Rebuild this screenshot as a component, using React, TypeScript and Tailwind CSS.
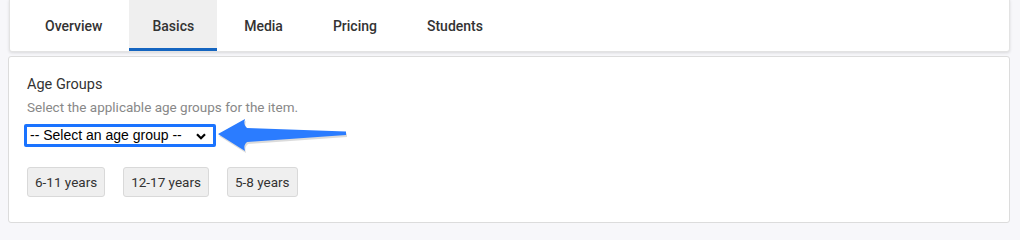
import { useState } from "react";

const tabs = ["Overview", "Basics", "Media", "Pricing", "Students"];
const ageGroups = ["6-11 years", "12-17 years", "5-8 years"];

export default function App() {
  const [activeTab, setActiveTab] = useState("Basics");

  return (
    <div className="h-screen w-full overflow-hidden bg-[#f7f7fa] pl-[8px] pr-[10px] font-['Roboto',sans-serif] text-[14px] text-[#333]">
      <div className="ml-px -mt-px flex h-[53px] items-stretch rounded-b-[3px] border border-[#e3e3e3] bg-white pl-[12px] shadow-[0_1px_3px_rgba(0,0,0,0.12)]">
        {tabs.map((tab) => (
          <button
            key={tab}
            onClick={() => setActiveTab(tab)}
            className={
              activeTab === tab
                ? "mr-[4px] border-b-[3px] border-[#1565c0] bg-[#efefef] px-[23px] pt-[5px] font-medium text-[#333]"
                : "mr-[4px] border-b-[3px] border-transparent px-[23px] pt-[5px] font-medium text-[#333]"
            }
          >
            {tab}
          </button>
        ))}
      </div>

      <div className="mt-[4px] rounded-[3px] border border-[#dcdcdc] bg-white pb-[25px] pl-[18px] pt-[18px]">
        <div className="text-[14.5px] leading-[20px]">Age Groups</div>
        <div className="mt-[2px] text-[13.5px] leading-[20px] text-[#888]">
          Select the applicable age groups for the item.
        </div>

        <div className="relative -ml-[3px] mt-[7px] w-[192px]">
          <select className="h-[23px] w-[192px] appearance-none rounded-[2px] border-[3px] border-[#1a73ff] bg-white pl-[3px] font-['Liberation_Sans',Arial,sans-serif] text-[14px] leading-[17px] text-black outline-none">
            <option>-- Select an age group --</option>
            {ageGroups.map((g) => (
              <option key={g}>{g}</option>
            ))}
          </select>
          <svg
            className="pointer-events-none absolute right-[10px] top-[9px]"
            width="10"
            height="7"
            viewBox="0 0 10 7"
          >
            <path d="M1 1.2 L5 5.2 L9 1.2" fill="none" stroke="#000" strokeWidth="2.2" />
          </svg>
          <svg
            className="pointer-events-none absolute left-[194px] top-[-6px]"
            width="132"
            height="38"
            viewBox="0 0 132 38"
          >
            <path
              d="M0 16 L27 1 Q25 7 29 10 L128 13.5 L128 17 L29 24 Q25 27 27 33 Z"
              fill="#b8b8b8"
              opacity="0.5"
              transform="translate(1 2)"
            />
            <path
              d="M0 16 L27 1 Q25 7 29 10 L128 13.5 L128 17 L29 24 Q25 27 27 33 Z"
              fill="#2b7cff"
            />
          </svg>
        </div>

        <div className="mt-[20px] flex gap-[18px]">
          {ageGroups.map((g) => (
            <button
              key={g}
              className="h-[30px] rounded-[3px] border border-[#d9d9d9] bg-[#efefef] px-[7px] text-[13.5px] leading-[28px] text-[#333]"
            >
              {g}
            </button>
          ))}
        </div>
      </div>
    </div>
  );
}
